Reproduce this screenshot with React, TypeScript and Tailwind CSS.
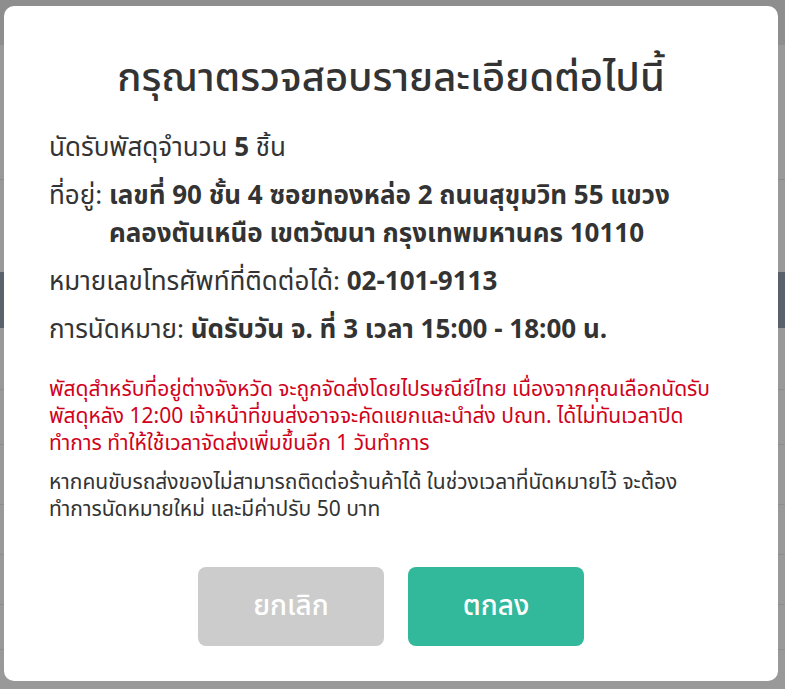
import React from "react";

export default function App() {
  return (
    <div className="relative w-[785px] h-[689px] overflow-hidden bg-[#999999] font-['Noto_Sans_Thai','Noto_Sans',sans-serif]">
      {/* dimmed page behind */}
      <div className="flex flex-col h-full">
        <div className="h-[45px] bg-[#8e8e8e]" />
        <div className="h-[135px] bg-[#999999] border-b border-[#8a8a8a]" />
        <div className="h-[92px] bg-[#999999]" />
        <div className="h-[56px] bg-[#59616b]" />
        <div className="h-[62px] bg-[#999999] border-b border-[#8e8e8e]" />
        <div className="h-[55px] bg-[#999999] border-b border-[#8e8e8e]" />
        <div className="h-[60px] bg-[#999999] border-b border-[#8e8e8e]" />
        <div className="h-[50px] bg-[#999999] border-b border-[#8e8e8e]" />
        <div className="h-[50px] bg-[#999999] border-b border-[#8e8e8e]" />
        <div className="h-[45px] bg-[#999999] border-b border-[#8e8e8e]" />
        <div className="flex-1 bg-[#999999]" />
      </div>

      {/* modal */}
      <div className="absolute left-[4px] top-[6px] w-[774px] h-[675px] bg-white rounded-[10px] flex flex-col pt-[53px] px-[45px] pb-[35px] text-[#333333]">
        <h1 className="text-center text-[40px] leading-[40px] font-medium whitespace-nowrap">
          กรุณาตรวจสอบรายละเอียดต่อไปนี้
        </h1>

        <div className="mt-[30px] flex flex-col gap-[10px] text-[26px] leading-[38px] whitespace-nowrap">
          <p>
            นัดรับพัสดุจำนวน <span className="font-bold">5</span> ชิ้น
          </p>
          <div className="flex">
            <span className="whitespace-pre">ที่อยู่: </span>
            <div className="flex flex-col font-bold">
              <span>เลขที่ 90 ชั้น 4 ซอยทองหล่อ 2 ถนนสุขุมวิท 55 แขวง</span>
              <span>คลองตันเหนือ เขตวัฒนา กรุงเทพมหานคร 10110</span>
            </div>
          </div>
          <p>
            หมายเลขโทรศัพท์ที่ติดต่อได้: <span className="font-bold">02-101-9113</span>
          </p>
          <p>
            การนัดหมาย: <span className="font-bold">นัดรับวัน จ. ที่ 3 เวลา 15:00 - 18:00 น.</span>
          </p>
        </div>

        <p className="mt-[27px] text-[21px] leading-[27px] text-[#d0021b] whitespace-nowrap">
          พัสดุสำหรับที่อยู่ต่างจังหวัด จะถูกจัดส่งโดยไปรษณีย์ไทย เนื่องจากคุณเลือกนัดรับ
          <br />
          พัสดุหลัง 12:00 เจ้าหน้าที่ขนส่งอาจจะคัดแยกและนำส่ง ปณท. ได้ไม่ทันเวลาปิด
          <br />
          ทำการ ทำให้ใช้เวลาจัดส่งเพิ่มขึ้นอีก 1 วันทำการ
        </p>

        <p className="mt-[12px] text-[21px] leading-[27px] text-[#333333] whitespace-nowrap">
          หากคนขับรถส่งของไม่สามารถติดต่อร้านค้าได้ ในช่วงเวลาที่นัดหมายไว้ จะต้อง
          <br />
          ทำการนัดหมายใหม่ และมีค่าปรับ 50 บาท
        </p>

        <div className="mt-auto flex justify-center gap-[24px]">
          <button className="w-[186px] h-[79px] rounded-[8px] bg-[#cccccc] text-white text-[28px] font-medium">
            ยกเลิก
          </button>
          <button className="w-[176px] h-[79px] rounded-[8px] bg-[#32b89a] text-white text-[28px] font-medium">
            ตกลง
          </button>
        </div>
      </div>
    </div>
  );
}
